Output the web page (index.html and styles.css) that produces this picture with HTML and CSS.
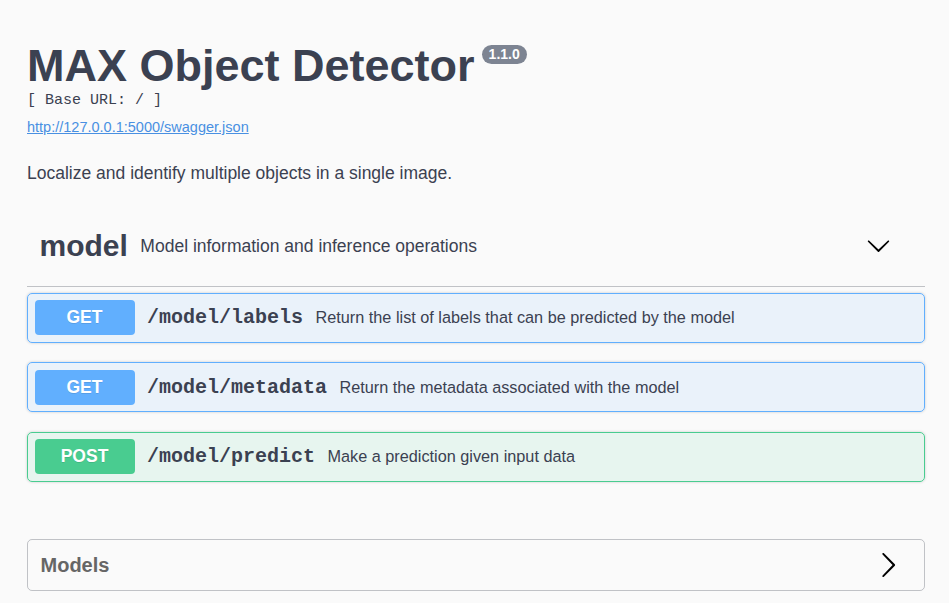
FILE: index.html
```html
<!DOCTYPE html>
<html lang="en">
<head>
<meta charset="utf-8">
<title>MAX Object Detector</title>
<link rel="stylesheet" href="styles.css">
</head>
<body>
<div class="wrapper">
  <div class="info">
    <h2 class="title">MAX Object Detector<span class="version">1.1.0</span></h2>
    <pre class="base-url">[ Base URL: / ]</pre>
    <div class="spec-line"><a class="spec-link" href="#">http://127.0.0.1:5000/swagger.json</a></div>
    <p class="desc">Localize and identify multiple objects in a single image.</p>
  </div>

  <div class="tag-section">
    <h4 class="tag">
      <span class="tag-name">model</span>
      <small class="tag-desc">Model information and inference operations</small>
      <svg class="tag-arrow" viewBox="0 0 20 20" width="25" height="25"><path d="M17.418 6.109c.272-.268.709-.268.979 0s.271.701 0 .969l-7.908 7.83c-.27.268-.707.268-.979 0l-7.908-7.83c-.27-.268-.27-.701 0-.969.271-.268.709-.268.979 0L10 13.25l7.418-7.141z"/></svg>
    </h4>

    <div class="opblock get">
      <span class="method">GET</span>
      <span class="path">/model/labels</span>
      <span class="summary">Return the list of labels that can be predicted by the model</span>
    </div>
    <div class="opblock get">
      <span class="method">GET</span>
      <span class="path">/model/metadata</span>
      <span class="summary">Return the metadata associated with the model</span>
    </div>
    <div class="opblock post">
      <span class="method">POST</span>
      <span class="path">/model/predict</span>
      <span class="summary">Make a prediction given input data</span>
    </div>
  </div>

  <section class="models">
    <h4 class="models-title">
      <span>Models</span>
      <svg class="models-arrow" viewBox="0 0 20 20" width="28" height="28"><path d="M13.25 10L6.109 2.58c-.268-.27-.268-.707 0-.979.268-.27.701-.27.969 0l7.83 7.908c.268.271.268.709 0 .979l-7.830 7.908c-.268.271-.701.27-.969 0-.268-.269-.268-.707 0-.979L13.25 10z"/></svg>
    </h4>
  </section>
</div>
</body>
</html>
```

FILE: styles.css
```css
html, body {
  margin: 0;
  padding: 0;
  background: #fafafa;
}

body {
  font-family: "Liberation Sans", Arial, sans-serif;
  color: #3b4151;
}

.wrapper {
  padding: 40px 24px 0 27px;
}

.title {
  display: flex;
  align-items: flex-start;
  margin: 0;
  font-size: 45px;
  font-weight: 700;
  line-height: normal;
  color: #3b4151;
}

.version {
  margin: 5px 0 0 7px;
  padding: 2px 7px;
  border-radius: 57px;
  background: #7d8492;
  color: #fff;
  font-size: 14px;
  font-weight: 700;
  line-height: 15px;
}

.base-url {
  margin: 0;
  font-family: "Liberation Mono", "Courier New", monospace;
  font-size: 15px;
  line-height: normal;
  color: #3b4151;
}

.spec-line {
  margin-top: 10px;
  font-size: 14.5px;
  line-height: normal;
}

.spec-link {
  color: #4990e2;
  text-decoration: underline;
}

.desc {
  margin: 28px 0 0;
  font-size: 17.5px;
  line-height: 20px;
  color: #3b4151;
}

.tag {
  display: flex;
  align-items: center;
  margin: 32px 0 6px;
  padding: 12.5px 25px 22px 12.5px;
  border-bottom: 1px solid rgba(59, 65, 81, 0.3);
  font-weight: 700;
}

.tag-name {
  font-size: 30px;
  line-height: 36px;
}

.tag-desc {
  flex: 1;
  padding: 0 12.5px;
  font-size: 17.5px;
  font-weight: 400;
  line-height: 20px;
}

.tag-arrow {
  margin-right: 9px;
  fill: #000;
}

.opblock {
  display: flex;
  align-items: center;
  margin-bottom: 19.5px;
  padding: 6.5px;
  border: 1px solid;
  border-radius: 5px;
  box-shadow: 0 0 3px rgba(0, 0, 0, 0.19);
}

.opblock.get {
  border-color: #61affe;
  background: rgba(97, 175, 254, 0.1);
}

.opblock.post {
  border-color: #49cc90;
  background: rgba(73, 204, 144, 0.1);
}

.method {
  display: flex;
  align-items: center;
  justify-content: center;
  width: 100px;
  height: 35px;
  border-radius: 4px;
  color: #fff;
  font-size: 17.5px;
  font-weight: 700;
  text-shadow: 0 1px 0 rgba(0, 0, 0, 0.1);
}

.get .method { background: #61affe; }
.post .method { background: #49cc90; }

.path {
  padding: 0 12.5px;
  font-family: "Liberation Mono", "Courier New", monospace;
  font-size: 20px;
  font-weight: 700;
  color: #3b4151;
}

.summary {
  font-size: 16.25px;
  color: #3b4151;
}

.models {
  margin-top: 57px;
  border: 1px solid rgba(59, 65, 81, 0.3);
  border-radius: 5px;
}

.models-title {
  display: flex;
  align-items: center;
  justify-content: space-between;
  margin: 0;
  padding: 13px 22px 13px 12.5px;
  font-size: 20px;
  font-weight: 700;
  line-height: 24px;
  color: #666;
  height: 24px;
}

.models-arrow {
  fill: #000;
}
```
